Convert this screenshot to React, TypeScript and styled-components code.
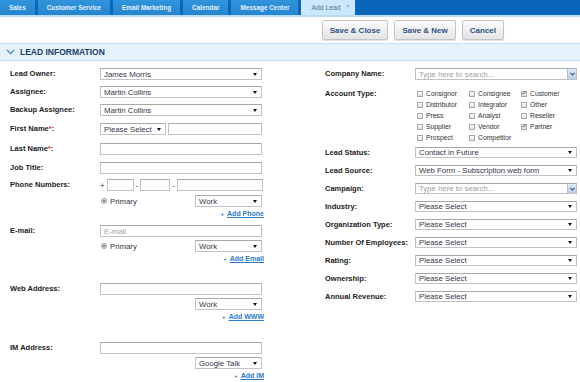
import React from "react";
import styled, { createGlobalStyle } from "styled-components";

const GlobalStyle = createGlobalStyle`
	html, body {
		margin: 0;
		padding: 0;
		background: #ffffff;
	}
	body {
		font-family: "Liberation Sans", Arial, sans-serif;
		color: #222222;
	}
`;

const Page = styled.div`
	width: 580px;
	height: 382px;
	overflow: hidden;
`;

/* ---------- tabs ---------- */

const TabBar = styled.div`
	display: flex;
	gap: 3px;
	height: 15px;
	background: #0a66b8;
	border-bottom: 2px solid #b9dcf5;
`;

const Tab = styled.div<{ $active?: boolean }>`
	display: flex;
	align-items: center;
	gap: 6px;
	padding: ${({ $active }) => ($active ? "0 5px 0 10px" : "0 9px")};
	background: ${({ $active }) => ($active ? "#cbe7fb" : "linear-gradient(#3194dc, #2585cf)")};
	color: ${({ $active }) => ($active ? "#56739a" : "#e6f2fc")};
	font-size: ${({ $active }) => ($active ? "6.8px" : "6.4px")};
	font-weight: ${({ $active }) => ($active ? "normal" : "bold")};
	white-space: nowrap;
`;

const TabClose = styled.span`
	font-size: 6px;
	color: #7d97b6;
	margin-top: -4px;
`;

/* ---------- toolbar ---------- */

const Toolbar = styled.div`
	display: flex;
	justify-content: flex-end;
	gap: 6px;
	height: 26px;
	padding: 3px 76px 0 0;
	box-sizing: border-box;
`;

const Button = styled.button`
	height: 20px;
	padding: 0 7px;
	border: 1px solid #c4c4c4;
	border-radius: 2px;
	background: linear-gradient(#fcfcfc, #e4e4e4);
	box-shadow: 0 1px 1px rgba(0, 0, 0, 0.12);
	font-family: "Liberation Sans", Arial, sans-serif;
	font-size: 8px;
	font-weight: bold;
	color: #2d5283;
`;

/* ---------- section ---------- */

const SectionHeader = styled.div`
	display: flex;
	align-items: center;
	gap: 5px;
	height: 16px;
	padding-left: 6px;
	background: #e3f2fc;
	border-top: 1px solid #c7dff0;
	border-bottom: 1px solid #c7dff0;
`;

const SectionTitle = styled.span`
	font-size: 8.5px;
	font-weight: bold;
	color: #203f66;
`;

const Form = styled.div`
	display: flex;
	padding-top: 7px;
`;

const LeftCol = styled.div`
	width: 315px;
	padding-left: 10px;
	box-sizing: border-box;
	display: flex;
	flex-direction: column;
`;

const RightCol = styled.div`
	flex: 1;
	padding-left: 10px;
	display: flex;
	flex-direction: column;
`;

const Row = styled.div<{ $mt?: number }>`
	display: flex;
	align-items: flex-start;
	margin-top: ${({ $mt }) => $mt ?? 0}px;
`;

const Label = styled.div<{ $h?: number }>`
	width: 90px;
	flex: none;
	font-size: 7.5px;
	font-weight: bold;
	line-height: ${({ $h }) => $h ?? 12}px;
	color: #222222;
	white-space: nowrap;
`;

const Req = styled.span`
	color: #e0302a;
`;

const Controls = styled.div`
	width: 162px;
	display: flex;
	flex-direction: column;
`;

const SubRow = styled.div<{ $mt?: number; $end?: boolean }>`
	display: flex;
	align-items: center;
	justify-content: ${({ $end }) => ($end ? "flex-end" : "space-between")};
	margin-top: ${({ $mt }) => $mt ?? 3}px;
`;

const Field = styled.input<{ $h?: number; $w?: number }>`
	display: block;
	box-sizing: border-box;
	flex: none;
	width: ${({ $w }) => ($w ? `${$w}px` : "100%")};
	height: ${({ $h }) => $h ?? 12}px;
	margin: 0;
	padding: 0 3px;
	border: 1px solid #c2c2c2;
	border-top-color: #a9a9a9;
	background: #ffffff;
	font-family: "Liberation Sans", Arial, sans-serif;
	font-size: 7.8px;
	color: #353548;
	outline: none;
	&::placeholder {
		color: #a0a0a0;
	}
`;

const SelectBox = styled.div<{ $h?: number; $w?: number }>`
	box-sizing: border-box;
	display: flex;
	align-items: center;
	justify-content: space-between;
	flex: none;
	width: ${({ $w }) => ($w ? `${$w}px` : "100%")};
	height: ${({ $h }) => $h ?? 12}px;
	padding: 0 4px 0 3px;
	border: 1px solid #c2c2c2;
	border-top-color: #a9a9a9;
	background: #ffffff;
	font-size: 7.8px;
	color: #353548;
	white-space: nowrap;
`;

const Arrow = styled.span`
	width: 0;
	height: 0;
	border-left: 2px solid transparent;
	border-right: 2px solid transparent;
	border-top: 3px solid #111111;
`;

const ComboWrap = styled.div<{ $h?: number }>`
	position: relative;
	height: ${({ $h }) => $h ?? 12}px;
`;

const ComboButton = styled.span`
	position: absolute;
	right: 1px;
	top: 1px;
	bottom: 1px;
	width: 8px;
	display: flex;
	align-items: center;
	justify-content: center;
	background: linear-gradient(#e3ecf7, #b8cbe4);
	border-left: 1px solid #a9bfdc;
`;

const Link = styled.a`
	align-self: flex-end;
	margin-top: 1px;
	margin-right: -2px;
	height: 12px;
	line-height: 12px;
	font-size: 7px;
	font-weight: bold;
	color: #2a7bc3;
	text-decoration: underline;
	cursor: pointer;
`;

const Plus = styled.span`
	display: inline-block;
	margin-right: 3px;
	font-size: 6px;
	text-decoration: none;
	color: #2a7bc3;
`;

const PhoneRow = styled.div`
	display: flex;
	align-items: center;
	gap: 2px;
	font-size: 7.8px;
	color: #333333;
`;

const Radio = styled.span`
	display: inline-flex;
	align-items: center;
	justify-content: center;
	width: 6px;
	height: 6px;
	box-sizing: border-box;
	border: 1px solid #9c9c9c;
	border-radius: 50%;
	background: #e6e6e6;
	&::after {
		content: "";
		width: 2px;
		height: 2px;
		border-radius: 50%;
		background: #555555;
	}
`;

const RadioLabel = styled.label`
	display: flex;
	align-items: center;
	gap: 3px;
	padding-left: 1px;
	font-size: 7.8px;
	color: #353548;
`;

const CheckGrid = styled.div`
	display: grid;
	grid-template-columns: 52px 52px 52px;
	grid-auto-rows: 11px;
	padding-left: 2px;
`;

const CheckItem = styled.label`
	display: flex;
	align-items: center;
	gap: 3px;
	font-size: 6.8px;
	color: #333333;
	white-space: nowrap;
`;

const CheckBox = styled.span`
	display: inline-flex;
	align-items: center;
	justify-content: center;
	width: 6px;
	height: 6px;
	box-sizing: border-box;
	border: 1px solid #a8a8a8;
	background: linear-gradient(#ffffff, #e2e2e2);
`;

/* ---------- small pieces ---------- */

const Select = ({ value, h, w }: { value: string; h?: number; w?: number }) => (
	<SelectBox $h={h} $w={w}>
		<span>{value}</span>
		<Arrow />
	</SelectBox>
);

const Combo = ({ h }: { h?: number }) => (
	<ComboWrap $h={h}>
		<Field $h={h} placeholder="Type here to search..." readOnly />
		<ComboButton>
			<svg width="5" height="4" viewBox="0 0 5 4">
				<polyline points="0.5,0.8 2.5,3 4.5,0.8" fill="none" stroke="#2d4f85" strokeWidth="1.1" />
			</svg>
		</ComboButton>
	</ComboWrap>
);

const Check = ({ label, checked }: { label: string; checked?: boolean }) => (
	<CheckItem>
		<CheckBox>
			{checked && (
				<svg width="6" height="6" viewBox="0 0 6 6" style={{ marginTop: -1 }}>
					<polyline points="0.8,3 2.3,4.6 5.4,0.6" fill="none" stroke="#222" strokeWidth="1.2" />
				</svg>
			)}
		</CheckBox>
		{label}
	</CheckItem>
);

const AddLink = ({ children }: { children: string }) => (
	<Link>
		<Plus>+</Plus>
		{children}
	</Link>
);

const tabs = ["Sales", "Customer Service", "Email Marketing", "Calendar", "Message Center"];

const accountTypes: [string, boolean][] = [
	["Consignor", false],
	["Consignee", false],
	["Customer", true],
	["Distributor", false],
	["Integrator", false],
	["Other", false],
	["Press", false],
	["Analyst", false],
	["Reseller", false],
	["Supplier", false],
	["Vendor", false],
	["Partner", true],
	["Prospect", false],
	["Competitor", false],
];

const rightSelects: [string, string][] = [
	["Industry:", "Please Select"],
	["Organization Type:", "Please Select"],
	["Number Of Employees:", "Please Select"],
	["Rating:", "Please Select"],
	["Ownership:", "Please Select"],
	["Annual Revenue:", "Please Select"],
];

export default function App() {
	return (
		<Page>
			<GlobalStyle />
			<TabBar>
				{tabs.map((t) => (
					<Tab key={t}>{t}</Tab>
				))}
				<Tab $active>
					Add Lead
					<TabClose>×</TabClose>
				</Tab>
			</TabBar>

			<Toolbar>
				<Button>Save &amp; Close</Button>
				<Button>Save &amp; New</Button>
				<Button>Cancel</Button>
			</Toolbar>

			<SectionHeader>
				<svg width="9" height="6" viewBox="0 0 9 6">
					<polyline points="1,1 4.5,4.5 8,1" fill="none" stroke="#6a9acb" strokeWidth="1.6" />
				</svg>
				<SectionTitle>LEAD INFORMATION</SectionTitle>
			</SectionHeader>

			<Form>
				<LeftCol>
					<Row>
						<Label>Lead Owner:</Label>
						<Controls>
							<Select value="James Morris" />
						</Controls>
					</Row>
					<Row $mt={6}>
						<Label>Assignee:</Label>
						<Controls>
							<Select value="Martin Collins" />
						</Controls>
					</Row>
					<Row $mt={6}>
						<Label>Backup Assignee:</Label>
						<Controls>
							<Select value="Martin Collins" />
						</Controls>
					</Row>
					<Row $mt={7}>
						<Label>
							First Name<Req>*</Req>:
						</Label>
						<Controls>
							<SubRow $mt={0}>
								<Select value="Please Select" w={66} />
								<Field $w={94} readOnly />
							</SubRow>
						</Controls>
					</Row>
					<Row $mt={8}>
						<Label>
							Last Name<Req>*</Req>:
						</Label>
						<Controls>
							<Field readOnly />
						</Controls>
					</Row>
					<Row $mt={7}>
						<Label>Job Title:</Label>
						<Controls>
							<Field readOnly />
						</Controls>
					</Row>

					<Row $mt={5}>
						<Label>Phone Numbers:</Label>
						<Controls>
							<PhoneRow>
								<span>+</span>
								<Field $w={27} readOnly />
								<span>-</span>
								<Field $w={30} readOnly />
								<span>-</span>
								<Field $w={86} readOnly />
							</PhoneRow>
							<SubRow $mt={4}>
								<RadioLabel>
									<Radio />
									Primary
								</RadioLabel>
								<Select value="Work" w={67} />
							</SubRow>
							<AddLink>Add Phone</AddLink>
						</Controls>
					</Row>

					<Row $mt={5}>
						<Label>E-mail:</Label>
						<Controls>
							<Field placeholder="E-mail" readOnly />
							<SubRow>
								<RadioLabel>
									<Radio />
									Primary
								</RadioLabel>
								<Select value="Work" w={67} />
							</SubRow>
							<AddLink>Add Email</AddLink>
						</Controls>
					</Row>

					<Row $mt={18}>
						<Label>Web Address:</Label>
						<Controls>
							<Field readOnly />
							<SubRow $end>
								<Select value="Work" w={67} />
							</SubRow>
							<AddLink>Add WWW</AddLink>
						</Controls>
					</Row>

					<Row $mt={19}>
						<Label>IM Address:</Label>
						<Controls>
							<Field readOnly />
							<SubRow $end>
								<Select value="Google Talk" w={67} />
							</SubRow>
							<AddLink>Add IM</AddLink>
						</Controls>
					</Row>
				</LeftCol>

				<RightCol>
					<Row>
						<Label>Company Name:</Label>
						<Controls>
							<Combo />
						</Controls>
					</Row>
					<Row $mt={8}>
						<Label $h={11}>Account Type:</Label>
						<Controls>
							<CheckGrid>
								{accountTypes.map(([name, checked]) => (
									<Check key={name} label={name} checked={checked} />
								))}
							</CheckGrid>
						</Controls>
					</Row>
					<Row $mt={4}>
						<Label $h={11}>Lead Status:</Label>
						<Controls>
							<Select value="Contact in Future" h={11} />
						</Controls>
					</Row>
					<Row $mt={7}>
						<Label $h={11}>Lead Source:</Label>
						<Controls>
							<Select value="Web Form - Subscription web form" h={11} />
						</Controls>
					</Row>
					<Row $mt={7}>
						<Label $h={11}>Campaign:</Label>
						<Controls>
							<Combo h={11} />
						</Controls>
					</Row>
					{rightSelects.map(([label, value]) => (
						<Row key={label} $mt={7}>
							<Label $h={11}>{label}</Label>
							<Controls>
								<Select value={value} h={11} />
							</Controls>
						</Row>
					))}
				</RightCol>
			</Form>
		</Page>
	);
}
